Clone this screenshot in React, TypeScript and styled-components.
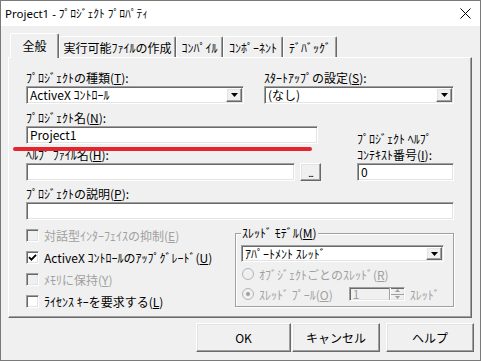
import styled, { createGlobalStyle, css } from 'styled-components';

const GlobalStyle = createGlobalStyle`
  html, body { margin: 0; padding: 0; background: #ffffff; }
  body {
    font-family: "Noto Sans CJK JP", "Noto Sans", sans-serif;
    font-size: 12px;
    color: #000;
  }
  *, *::before, *::after { box-sizing: border-box; }
`;

const sunken = css`
  border-style: solid;
  border-width: 1px;
  border-color: #a0a0a0 #ffffff #ffffff #a0a0a0;
  box-shadow: inset 1px 1px 0 #696969, inset -1px -1px 0 #e3e3e3;
`;

const raised = css`
  border-style: solid;
  border-width: 1px;
  border-color: #ffffff #696969 #696969 #ffffff;
  box-shadow: inset -1px -1px 0 #a0a0a0, inset 1px 1px 0 #e3e3e3;
`;

const Window = styled.div`
  position: relative;
  width: 481px;
  height: 361px;
  border: 1px solid #7a7a7a;
  background: #f0f0f0;
  display: flex;
  flex-direction: column;
  overflow: hidden;
`;

const TitleBar = styled.div`
  height: 25px;
  flex: none;
  background: #ffffff;
  display: flex;
  align-items: center;
  justify-content: space-between;
  padding: 0 9px 0 4px;
  font-family: "Noto Sans", "Noto Sans CJK JP", sans-serif;
  font-size: 11.5px;
  line-height: 14px;
`;

const Body = styled.div`
  flex: 1;
  display: flex;
  flex-direction: column;
  padding: 7px 8px 0 7px;
`;

const TabStrip = styled.div`
  display: flex;
  align-items: flex-end;
  height: 24px;
  padding-left: 2px;
  position: relative;
  z-index: 1;
`;

const Tab = styled.div<{ $w: number; $active?: boolean }>`
  width: ${p => p.$w}px;
  height: ${p => (p.$active ? 25 : 21)}px;
  margin-bottom: ${p => (p.$active ? -1 : 0)}px;
  background: #f0f0f0;
  border-top: 1px solid #ffffff;
  border-left: 1px solid #ffffff;
  border-right: 1px solid #696969;
  box-shadow: inset -1px 0 0 #a0a0a0;
  border-radius: 2px 2px 0 0;
  display: flex;
  align-items: center;
  justify-content: center;
  padding-bottom: ${p => (p.$active ? 2 : 0)}px;
  line-height: 13px;
  white-space: nowrap;
`;

const Panel = styled.div`
  height: 261px;
  flex: none;
  border-style: solid;
  border-width: 1px;
  border-color: #ffffff #696969 #696969 #ffffff;
  box-shadow: inset -1px -1px 0 #a0a0a0;
  padding: 13px 17px 0 17px;
  display: flex;
  flex-direction: column;
`;

const Split = styled.div<{ $gap?: number; $mt?: number }>`
  display: flex;
  gap: ${p => p.$gap ?? 0}px;
  margin-top: ${p => p.$mt ?? 0}px;
`;

const Column = styled.div<{ $w: number; $end?: boolean }>`
  width: ${p => p.$w}px;
  display: flex;
  flex-direction: column;
  align-self: ${p => (p.$end ? 'flex-end' : 'auto')};
`;

const Field = styled.div<{ $mt?: number }>`
  display: flex;
  flex-direction: column;
  margin-top: ${p => p.$mt ?? 0}px;
`;

const Label = styled.div<{ $lh?: number }>`
  line-height: ${p => p.$lh ?? 13}px;
  margin-bottom: 2px;
  white-space: nowrap;
`;

const Mn = styled.span`
  text-decoration: underline;
  text-underline-offset: 1px;
`;

const TextBox = styled.div<{ $w?: number; $h?: number }>`
  ${sunken};
  width: ${p => (p.$w ? `${p.$w}px` : '100%')};
  height: ${p => p.$h ?? 18}px;
  background: #ffffff;
  padding: 0 3px;
  display: flex;
  align-items: center;
  line-height: 14px;
  white-space: nowrap;
`;

const Combo = styled(TextBox)`
  justify-content: space-between;
  padding-right: 1px;
`;

const DropButton = styled.div`
  ${raised};
  width: 16px;
  height: calc(100% - 2px);
  background: #f0f0f0;
  display: flex;
  align-items: center;
  justify-content: center;
`;

const Browse = styled.div`
  ${raised};
  width: 21px;
  height: 18px;
  background: #f0f0f0;
  display: flex;
  align-items: flex-end;
  justify-content: center;
  font-size: 9px;
  line-height: 12px;
  letter-spacing: -1px;
`;

const CheckList = styled.div`
  width: 209px;
  display: flex;
  flex-direction: column;
`;

const OptionRow = styled.div<{ $h?: number; $disabled?: boolean }>`
  height: ${p => p.$h ?? 22}px;
  display: flex;
  align-items: center;
  gap: 5px;
  color: ${p => (p.$disabled ? '#a0a0a0' : '#000')};
  white-space: nowrap;
  line-height: 13px;
`;

const Box = styled.div<{ $disabled?: boolean }>`
  ${sunken};
  width: 13px;
  height: 13px;
  flex: none;
  background: ${p => (p.$disabled ? '#f0f0f0' : '#ffffff')};
  display: flex;
  align-items: center;
  justify-content: center;
`;

const Radio = styled.div<{ $checked?: boolean }>`
  width: 12px;
  height: 12px;
  flex: none;
  border-radius: 50%;
  border: 1px solid #b4b4b4;
  background: #f0f0f0;
  margin-left: 1px;
  display: flex;
  align-items: center;
  justify-content: center;
  &::after {
    content: '';
    display: ${p => (p.$checked ? 'block' : 'none')};
    width: 4px;
    height: 4px;
    border-radius: 50%;
    background: #a0a0a0;
  }
`;

const GroupBox = styled.div`
  position: relative;
  width: 219px;
  height: 74px;
  margin-top: 9px;
  border: 1px solid #a0a0a0;
  box-shadow: inset 1px 1px 0 #ffffff, 1px 1px 0 #ffffff;
  padding: 11px 9px 0 5px;
  display: flex;
  flex-direction: column;
`;

const GroupTitle = styled.div`
  position: absolute;
  top: -8px;
  left: 5px;
  padding: 0 1px;
  background: #f0f0f0;
  line-height: 14px;
  white-space: nowrap;
`;

const RadioList = styled.div`
  margin-top: 2px;
  display: flex;
  flex-direction: column;
`;

const Spin = styled.div`
  ${sunken};
  width: 56px;
  height: 14px;
  margin-left: 11px;
  background: #f0f0f0;
  display: flex;
  align-items: center;
  justify-content: space-between;
  padding-left: 3px;
  line-height: 12px;
`;

const SpinButtons = styled.div`
  width: 14px;
  height: 100%;
  display: flex;
  flex-direction: column;
  border-left: 1px solid #ffffff;
  box-shadow: -1px 0 0 #a0a0a0;
`;

const SpinHalf = styled.div<{ $top?: boolean }>`
  flex: 1;
  display: flex;
  align-items: center;
  justify-content: center;
  border-bottom: ${p => (p.$top ? '1px solid #a0a0a0' : 'none')};
`;

const ButtonRow = styled.div`
  display: flex;
  justify-content: flex-end;
  margin-top: 5px;
  margin-right: -2px;
`;

const Button = styled.div<{ $w: number; $ml?: number }>`
  ${raised};
  width: ${p => p.$w}px;
  height: 29px;
  margin-left: ${p => p.$ml ?? 0}px;
  background: #f0f0f0;
  display: flex;
  align-items: center;
  justify-content: center;
  line-height: 14px;
`;

const Marker = styled.div`
  position: absolute;
  left: 12px;
  top: 146px;
  width: 299px;
  height: 4px;
  border-radius: 2px;
  background: #e3252d;
`;

const CloseIcon = () => (
  <svg width="11" height="11" viewBox="0 0 11 11">
    <path d="M0.5 0.5 L10.5 10.5 M10.5 0.5 L0.5 10.5" stroke="#000" strokeWidth="1" fill="none" />
  </svg>
);

const Arrow = () => (
  <svg width="7" height="4" viewBox="0 0 7 4">
    <path d="M0 0 H7 L3.5 4 Z" fill="#000" />
  </svg>
);

const Check = () => (
  <svg width="9" height="9" viewBox="0 0 9 9">
    <path d="M1 4.2 L3.4 6.6 L8 1.8" stroke="#000" strokeWidth="1.8" fill="none" />
  </svg>
);

const SmallArrow = ({ up }: { up?: boolean }) => (
  <svg width="5" height="3" viewBox="0 0 5 3">
    <path d={up ? 'M0 3 H5 L2.5 0 Z' : 'M0 0 H5 L2.5 3 Z'} fill="#a0a0a0" />
  </svg>
);

const tabs = [
  { label: '全般', w: 49, active: true },
  { label: '実行可能ﾌｧｲﾙの作成', w: 117 },
  { label: 'ｺﾝﾊﾟｲﾙ', w: 47 },
  { label: 'ｺﾝﾎﾟｰﾈﾝﾄ', w: 60 },
  { label: 'ﾃﾞﾊﾞｯｸﾞ', w: 54 },
];

export default function App() {
  return (
    <>
      <GlobalStyle />
      <Window>
        <TitleBar>
          <span>Project1 - ﾌﾟﾛｼﾞｪｸﾄ ﾌﾟﾛﾊﾟﾃｨ</span>
          <CloseIcon />
        </TitleBar>
        <Body>
          <TabStrip>
            {tabs.map(t => (
              <Tab key={t.label} $w={t.w} $active={t.active}>{t.label}</Tab>
            ))}
          </TabStrip>
          <Panel>
            <Split $gap={20}>
              <Column $w={218}>
                <Label>ﾌﾟﾛｼﾞｪｸﾄの種類(<Mn>T</Mn>):</Label>
                <Combo>ActiveX ｺﾝﾄﾛｰﾙ<DropButton><Arrow /></DropButton></Combo>
              </Column>
              <Column $w={190}>
                <Label>ｽﾀｰﾄｱｯﾌﾟの設定(<Mn>S</Mn>):</Label>
                <Combo>(なし)<DropButton><Arrow /></DropButton></Combo>
              </Column>
            </Split>

            <Split $gap={36} $mt={7}>
              <Column $w={295}>
                <Field>
                  <Label>ﾌﾟﾛｼﾞｪｸﾄ名(<Mn>N</Mn>):</Label>
                  <TextBox $w={292}>Project1</TextBox>
                </Field>
                <Field $mt={4}>
                  <Label>ﾍﾙﾌﾟ ﾌｧｲﾙ名(<Mn>H</Mn>):</Label>
                  <Split $gap={5}>
                    <TextBox $w={269} />
                    <Browse>...</Browse>
                  </Split>
                </Field>
              </Column>
              <Column $w={97} $end>
                <Label $lh={14}>ﾌﾟﾛｼﾞｪｸﾄ ﾍﾙﾌﾟ</Label>
                <Label $lh={13}>ｺﾝﾃｷｽﾄ番号(<Mn>I</Mn>):</Label>
                <TextBox>0</TextBox>
              </Column>
            </Split>

            <Field $mt={6}>
              <Label>ﾌﾟﾛｼﾞｪｸﾄの説明(<Mn>P</Mn>):</Label>
              <TextBox />
            </Field>

            <Split $mt={4}>
              <CheckList>
                <OptionRow $disabled>
                  <Box $disabled />
                  <span>対話型ｲﾝﾀｰﾌｪｲｽの抑制(<Mn>E</Mn>)</span>
                </OptionRow>
                <OptionRow>
                  <Box><Check /></Box>
                  <span>ActiveX ｺﾝﾄﾛｰﾙのｱｯﾌﾟｸﾞﾚｰﾄﾞ(<Mn>U</Mn>)</span>
                </OptionRow>
                <OptionRow $disabled>
                  <Box $disabled />
                  <span>ﾒﾓﾘに保持(<Mn>Y</Mn>)</span>
                </OptionRow>
                <OptionRow>
                  <Box />
                  <span>ﾗｲｾﾝｽ ｷｰを要求する(<Mn>L</Mn>)</span>
                </OptionRow>
              </CheckList>
              <GroupBox>
                <GroupTitle>ｽﾚｯﾄﾞ ﾓﾃﾞﾙ(<Mn>M</Mn>)</GroupTitle>
                <Combo $h={17}>ｱﾊﾟｰﾄﾒﾝﾄ ｽﾚｯﾄﾞ<DropButton><Arrow /></DropButton></Combo>
                <RadioList>
                  <OptionRow $h={20} $disabled>
                    <Radio />
                    <span>ｵﾌﾞｼﾞｪｸﾄごとのｽﾚｯﾄﾞ(<Mn>R</Mn>)</span>
                  </OptionRow>
                  <OptionRow $h={20} $disabled>
                    <Radio $checked />
                    <span>ｽﾚｯﾄﾞ ﾌﾟｰﾙ(<Mn>O</Mn>)</span>
                    <Spin>
                      1
                      <SpinButtons>
                        <SpinHalf $top><SmallArrow up /></SpinHalf>
                        <SpinHalf><SmallArrow /></SpinHalf>
                      </SpinButtons>
                    </Spin>
                    <span>ｽﾚｯﾄﾞ</span>
                  </OptionRow>
                </RadioList>
              </GroupBox>
            </Split>
          </Panel>
          <ButtonRow>
            <Button $w={95}>OK</Button>
            <Button $w={88} $ml={1}>キャンセル</Button>
            <Button $w={88} $ml={6}>ヘルプ</Button>
          </ButtonRow>
        </Body>
        <Marker />
      </Window>
    </>
  );
}
